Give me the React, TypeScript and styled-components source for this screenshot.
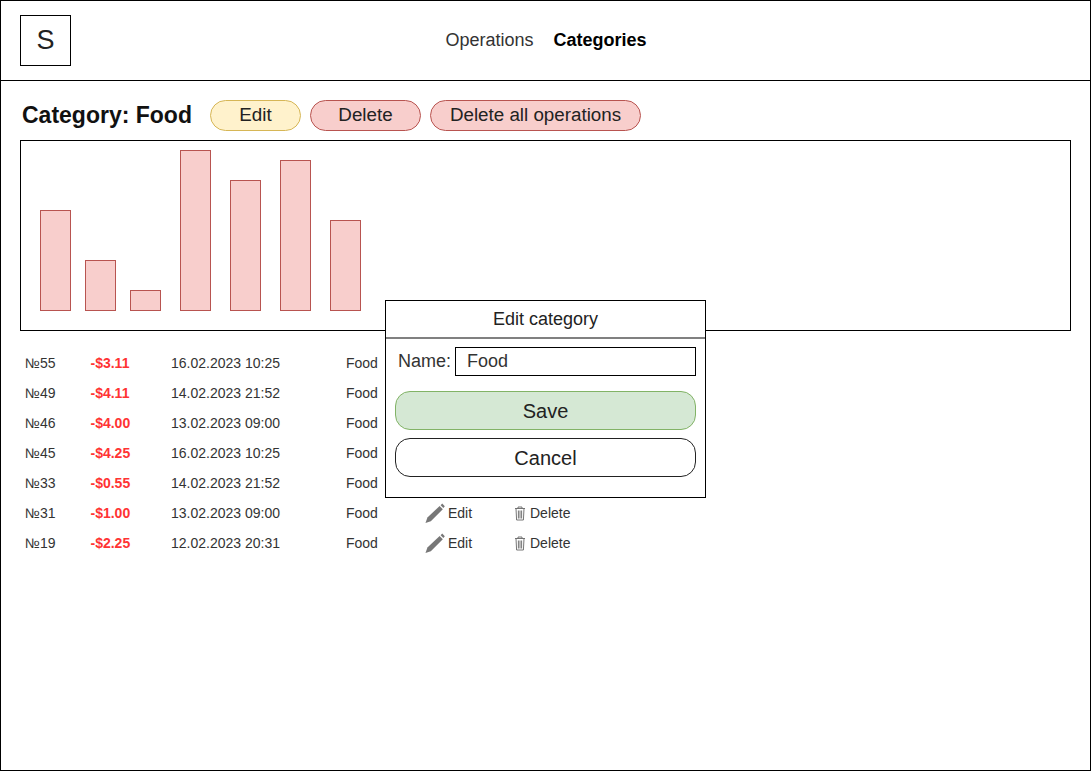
import styled, { createGlobalStyle } from 'styled-components'

const GlobalStyle = createGlobalStyle`
  * {
    box-sizing: border-box;
  }

  body {
    margin: 0;
    background: #fff;
    color: #1a1a1a;
    font-family: 'Liberation Sans', Arial, sans-serif;
  }
`

const Page = styled.div`
  position: relative;
  width: 1091px;
  height: 771px;
  border: 1px solid #000;
  overflow: hidden;
`

const Header = styled.header`
  display: grid;
  grid-template-columns: 1fr auto 1fr;
  align-items: center;
  height: 80px;
  padding: 0 19px;
  border-bottom: 1px solid #000;
`

const Logo = styled.div`
  display: flex;
  align-items: center;
  justify-content: center;
  width: 51px;
  height: 51px;
  margin-top: -1px;
  border: 1px solid #000;
  font-size: 27px;
  color: #222;
`

const Nav = styled.nav`
  display: flex;
  gap: 20px;
  margin-top: -1px;
  padding-left: 1px;
  font-size: 18px;
`

const NavItem = styled.a<{ $active?: boolean }>`
  font-weight: ${p => (p.$active ? 700 : 400)};
  color: ${p => (p.$active ? '#000' : '#333')};
`

const Main = styled.main`
  padding: 19px 19px 0;
`

const TitleRow = styled.div`
  display: flex;
  align-items: center;
  gap: 9px;
  height: 31px;
`

const Title = styled.h1`
  width: 170px;
  margin: 0 9px 0 2px;
  font-size: 23px;
  line-height: 31px;
  font-weight: 700;
  white-space: nowrap;
  color: #111;
`

const Pill = styled.button<{ $width: number; $tone: 'yellow' | 'red' }>`
  width: ${p => p.$width}px;
  height: 31px;
  padding: 0 0 2px;
  border: 1px solid ${p => (p.$tone === 'yellow' ? '#d6b656' : '#b85450')};
  border-radius: 16px;
  background: ${p => (p.$tone === 'yellow' ? '#fff2cc' : '#f8cecc')};
  color: #222;
  font-family: inherit;
  font-size: 18.8px;
  line-height: 27px;
`

const Chart = styled.div`
  display: flex;
  align-items: flex-end;
  height: 191px;
  margin-top: 9px;
  padding: 0 0 19px 19px;
  border: 1px solid #000;
`

const Bar = styled.div<{ $height: number; $gap: number }>`
  width: 31px;
  height: ${p => p.$height}px;
  margin-right: ${p => p.$gap}px;
  border: 1px solid #b85450;
  background: #f8cecc;
`

const List = styled.div`
  margin-top: 17px;
  padding-left: 5px;
`

const Row = styled.div`
  display: grid;
  grid-template-columns: 65.5px 80.5px 175px 79px 89px auto;
  align-items: center;
  height: 30px;
  font-size: 14px;
  color: #333;
`

const Amount = styled.span`
  font-weight: 700;
  color: #ff3333;
`

const Action = styled.span<{ $gap: number }>`
  display: inline-flex;
  align-items: center;
  gap: ${p => p.$gap}px;
`

const Modal = styled.div`
  position: absolute;
  left: 384px;
  top: 299px;
  width: 321px;
  height: 198px;
  border: 1px solid #000;
  background: #fff;
`

const ModalTitle = styled.div`
  height: 38px;
  border-bottom: 2px solid #808080;
  font-size: 18px;
  line-height: 36px;
  text-align: center;
  color: #222;
`

const ModalBody = styled.div`
  display: flex;
  flex-direction: column;
  padding: 8px 9px 0;
`

const NameRow = styled.label`
  display: flex;
  align-items: center;
  height: 29px;
  margin-bottom: 15px;
  padding-left: 3px;
  font-size: 18px;
  color: #333;
`

const NameInput = styled.input`
  width: 241px;
  height: 29px;
  margin-left: 4px;
  padding: 0 11px;
  border: 1px solid #000;
  border-radius: 0;
  outline: none;
  font-family: inherit;
  font-size: 18px;
  color: #333;
`

const ModalButton = styled.button<{ $primary?: boolean }>`
  width: 301px;
  height: 39px;
  margin-bottom: 8px;
  padding: 2px 0 0;
  border: 1px solid ${p => (p.$primary ? '#82b366' : '#222')};
  border-radius: 15px;
  background: ${p => (p.$primary ? '#d5e8d4' : '#fff')};
  color: #222;
  font-family: inherit;
  font-size: 20px;
`

const PencilIcon = () => (
  <svg width="20" height="20" viewBox="0 0 20 20" aria-hidden="true">
    <path d="M0.5 20 2.4 14.6 14.6 3 17.8 6.2 5.8 18.2z" fill="#777" />
    <path d="M15.6 2.2 17.2 0.6 19.8 3.2 18.4 5z" fill="#777" />
  </svg>
)

const TrashIcon = () => (
  <svg width="14" height="15" viewBox="0 0 14 15" aria-hidden="true">
    <path
      d="M1 2.5h10 M4 2.5V1h4v1.5 M2 2.5l.6 11.5h6.8l.6-11.5 M4.4 4.5v8 M6 4.5v8 M7.6 4.5v8"
      fill="none"
      stroke="#666"
      strokeWidth="0.9"
    />
  </svg>
)

const bars = [
  { height: 101, gap: 14 },
  { height: 51, gap: 14 },
  { height: 21, gap: 19 },
  { height: 161, gap: 19 },
  { height: 131, gap: 19 },
  { height: 151, gap: 19 },
  { height: 91, gap: 0 },
]

const operations = [
  { id: 55, amount: '-$3.11', date: '16.02.2023 10:25' },
  { id: 49, amount: '-$4.11', date: '14.02.2023 21:52' },
  { id: 46, amount: '-$4.00', date: '13.02.2023 09:00' },
  { id: 45, amount: '-$4.25', date: '16.02.2023 10:25' },
  { id: 33, amount: '-$0.55', date: '14.02.2023 21:52' },
  { id: 31, amount: '-$1.00', date: '13.02.2023 09:00' },
  { id: 19, amount: '-$2.25', date: '12.02.2023 20:31' },
]

const App = () => (
  <Page>
    <GlobalStyle />
    <Header>
      <Logo>S</Logo>
      <Nav>
        <NavItem>Operations</NavItem>
        <NavItem $active>Categories</NavItem>
      </Nav>
    </Header>
    <Main>
      <TitleRow>
        <Title>Category: Food</Title>
        <Pill $width={91} $tone="yellow">Edit</Pill>
        <Pill $width={111} $tone="red">Delete</Pill>
        <Pill $width={211} $tone="red">Delete all operations</Pill>
      </TitleRow>
      <Chart>
        {bars.map((bar, index) => (
          <Bar key={index} $height={bar.height} $gap={bar.gap} />
        ))}
      </Chart>
      <List>
        {operations.map(op => (
          <Row key={op.id}>
            <span>№{op.id}</span>
            <Amount>{op.amount}</Amount>
            <span>{op.date}</span>
            <span>Food</span>
            <Action $gap={3}>
              <PencilIcon />
              Edit
            </Action>
            <Action $gap={2}>
              <TrashIcon />
              Delete
            </Action>
          </Row>
        ))}
      </List>
    </Main>
    <Modal>
      <ModalTitle>Edit category</ModalTitle>
      <ModalBody>
        <NameRow>
          Name:
          <NameInput defaultValue="Food" />
        </NameRow>
        <ModalButton $primary>Save</ModalButton>
        <ModalButton>Cancel</ModalButton>
      </ModalBody>
    </Modal>
  </Page>
)

export default App
